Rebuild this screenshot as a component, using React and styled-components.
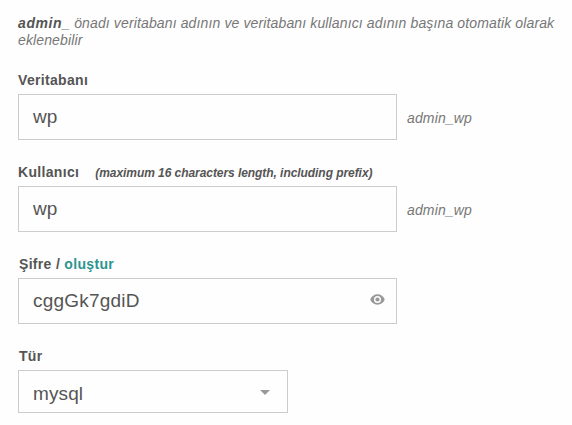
import React from "react";
import styled, { createGlobalStyle } from "styled-components";

const App = () => {
  return (
    <>
      <GlobalStyle />
      <Form>
        <Intro>
          <b>admin</b>_ önadı veritabanı adının ve veritabanı kullanıcı adının
          başına otomatik olarak eklenebilir
        </Intro>

        <Field>
          <Label htmlFor="database">Veritabanı</Label>
          <Row>
            <Input id="database" defaultValue="wp" />
            <Hint>admin_wp</Hint>
          </Row>
        </Field>

        <Field>
          <Label htmlFor="user">
            Kullanıcı
            <Note>(maximum 16 characters length, including prefix)</Note>
          </Label>
          <Row>
            <Input id="user" defaultValue="wp" />
            <Hint>admin_wp</Hint>
          </Row>
        </Field>

        <Field>
          <Label htmlFor="password" $indent>
            Şifre / <Generate>oluştur</Generate>
          </Label>
          <Row>
            <PasswordBox>
              <Input id="password" defaultValue="cggGk7gdiD" $spacing="0.2px" />
              <EyeIcon viewBox="0 0 15 11">
                <path
                  fillRule="evenodd"
                  d="M7.5 0.3C4.2 0.3 1.5 2.3 0.2 5.5C1.5 8.7 4.2 10.7 7.5 10.7S13.5 8.7 14.8 5.5C13.5 2.3 10.8 0.3 7.5 0.3ZM7.5 9A3.5 3.5 0 1 1 7.5 2A3.5 3.5 0 0 1 7.5 9Z"
                />
                <circle cx="7.5" cy="5.5" r="2.1" />
              </EyeIcon>
            </PasswordBox>
          </Row>
        </Field>

        <Field>
          <Label as="div" $indent>Tür</Label>
          <Select type="button">
            mysql
            <Caret viewBox="0 0 10 5">
              <path d="M0 0H10L5 5Z" />
            </Caret>
          </Select>
        </Field>
      </Form>
    </>
  );
};

export default App;

const GlobalStyle = createGlobalStyle`
  * {
    box-sizing: border-box;
  }
  body {
    margin: 0;
    background: #fefefe;
    color: #555;
    font-family: "Liberation Sans", Arial, sans-serif;
  }
`;

const Form = styled.form`
  padding: 15px 0 0 18px;
`;

const Intro = styled.p`
  margin: 0;
  width: 545px;
  height: 33px;
  font-size: 14px;
  line-height: 17px;
  font-style: italic;
  letter-spacing: 0.13px;
  color: #777;

  b {
    color: #555;
    letter-spacing: 0.6px;
  }
`;

const Field = styled.div`
  display: flex;
  flex-direction: column;
`;

const Label = styled.label`
  display: flex;
  align-items: baseline;
  height: 46px;
  padding: 24px 0 0 ${({ $indent }) => ($indent ? "1px" : "0")};
  font-size: 14px;
  line-height: 16px;
  font-weight: bold;
  white-space: pre;
  letter-spacing: 0.32px;
`;

const Note = styled.span`
  margin-left: 16px;
  font-size: 12px;
  font-style: italic;
  letter-spacing: -0.06px;
`;

const Generate = styled.span`
  color: #2c9491;
  cursor: pointer;
`;

const Row = styled.div`
  display: flex;
  align-items: center;
`;

const Input = styled.input`
  width: 379px;
  height: 46px;
  padding: 0 14px 1px;
  border: 1px solid #ccc;
  border-radius: 0;
  outline: none;
  background: #fefefe;
  color: #555;
  font-family: inherit;
  font-size: 19px;
  letter-spacing: ${({ $spacing }) => $spacing || "0"};
`;

const Hint = styled.span`
  margin-left: 10px;
  padding-top: 2px;
  font-size: 14px;
  font-style: italic;
  letter-spacing: 0.15px;
  color: #777;
`;

const PasswordBox = styled.div`
  position: relative;
`;

const EyeIcon = styled.svg`
  position: absolute;
  top: 15.5px;
  right: 12px;
  width: 15px;
  height: 11px;
  fill: #999;
`;

const Select = styled.button`
  display: flex;
  align-items: center;
  justify-content: space-between;
  width: 270px;
  height: 43px;
  padding: 4px 17px 0 14px;
  border: 1px solid #ccc;
  border-radius: 0;
  background: #fefefe;
  color: #555;
  font-family: inherit;
  font-size: 19px;
  letter-spacing: 0.1px;
`;

const Caret = styled.svg`
  width: 10px;
  height: 5px;
  margin-bottom: 2px;
  fill: #999;
`;
